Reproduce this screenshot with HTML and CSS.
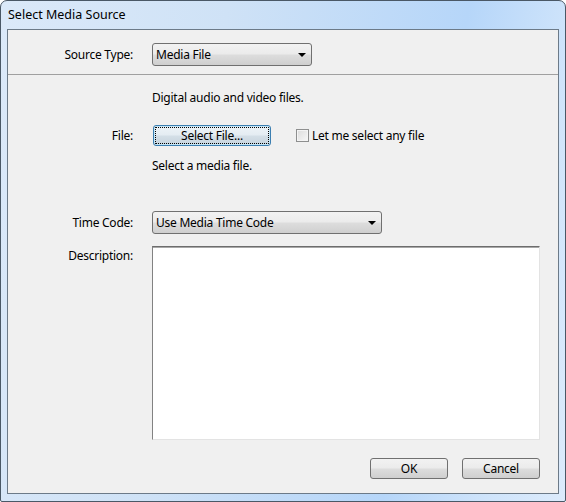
FILE: index.html
```html
<!DOCTYPE html>
<html lang="en">
<head>
    <meta charset="UTF-8">
    <title>Select Media Source</title>
    <link rel="stylesheet" href="styles.css">
</head>
<body>

<div class="window">
    <div class="titlebar">Select Media Source</div>

    <div class="client">
        <!-- source type picker -->
        <div class="form-row top-row">
            <label class="field-label">Source Type:</label>
            <div class="combo combo-short">
                <span class="combo-text">Media File</span>
                <span class="combo-arrow"></span>
            </div>
        </div>

        <div class="separator"></div>

        <div class="form-row hint-row">
            <span></span>
            <p class="hint">Digital audio and video files.</p>
        </div>

        <div class="form-row file-row">
            <label class="field-label">File:</label>
            <div class="file-controls">
                <button class="win-button focused select-file">Select File...</button>
                <label class="check">
                    <span class="check-box"></span>
                    Let me select any file
                </label>
            </div>
        </div>

        <div class="form-row status-row">
            <span></span>
            <p class="hint">Select a media file.</p>
        </div>

        <div class="form-row timecode-row">
            <label class="field-label">Time Code:</label>
            <div class="combo combo-long">
                <span class="combo-text">Use Media Time Code</span>
                <span class="combo-arrow"></span>
            </div>
        </div>

        <div class="form-row desc-row">
            <label class="field-label desc-label">Description:</label>
            <div class="textbox"></div>
        </div>

        <div class="dialog-buttons">
            <button class="win-button">OK</button>
            <button class="win-button">Cancel</button>
        </div>
    </div>
</div>

</body>
</html>
```

FILE: styles.css
```css
body {
    margin: 0;
    background: #fff;
    font-family: "Noto Sans", "Open Sans", sans-serif;
    font-size: 12px;
    letter-spacing: -0.25px;
    color: #000;
}

/* aero style window frame */
.window {
    width: 566px;
    height: 502px;
    box-sizing: border-box;
    border: 1px solid #4a5866;
    border-radius: 7px 7px 2px 2px;
    padding: 0 6px 7px 6px;
    background: linear-gradient(100deg, #dbe9f9 0%, #cfe2f6 35%, #b6d6f9 72%, #cfe4fb 88%, #dcebfc 100%);
}

.titlebar {
    height: 28px;
    line-height: 28px;
    padding-left: 1px;
    font-size: 12.5px;
    letter-spacing: 0;
    color: #000;
}

.client {
    height: 465px;
    box-sizing: border-box;
    border: 1px solid #6c7a88;
    background: #f0f0f0;
    padding: 13px 18px 0 0;
}

.form-row {
    display: grid;
    grid-template-columns: 125px 1fr;
    column-gap: 19px;
    align-items: center;
}

.field-label {
    text-align: right;
    line-height: 16px;
}

.hint {
    margin: 0;
    line-height: 16px;
}

/* dropdown list boxes */
.combo {
    height: 23px;
    box-sizing: border-box;
    border: 1px solid #707070;
    border-radius: 3px;
    background: linear-gradient(#f2f2f2 0%, #ebebeb 48%, #dddddd 52%, #cfcfcf 100%);
    display: flex;
    align-items: center;
    justify-content: space-between;
    padding: 0 5px 0 3px;
}

.combo-short {
    width: 160px;
}

.combo-long {
    width: 230px;
}

.combo-arrow {
    width: 0;
    height: 0;
    border-left: 4px solid transparent;
    border-right: 4px solid transparent;
    border-top: 4px solid #000;
    margin-top: 1px;
}

.separator {
    height: 1px;
    background: #a0a0a0;
    margin: 8px -18px 0 0;
}

.hint-row {
    margin-top: 15px;
}

.file-row {
    margin-top: 19px;
}

.file-controls {
    display: flex;
    align-items: center;
    gap: 25px;
}

.win-button {
    height: 21px;
    box-sizing: border-box;
    border: 1px solid #707070;
    border-radius: 3px;
    background: linear-gradient(#f2f2f2 0%, #ebebeb 48%, #dddddd 52%, #cfcfcf 100%);
    font-family: inherit;
    font-size: 12px;
    letter-spacing: inherit;
    color: #000;
    padding: 0;
    width: 78px;
}

.win-button.focused {
    border-color: #3c7fb1;
    box-shadow: inset 0 0 0 1px #c4e5f6;
    background: linear-gradient(#eef4f8 0%, #e4ecf2 48%, #d4dfe7 52%, #c6d3dd 100%);
    outline: 1px dotted #000;
    outline-offset: -3px;
}

.select-file {
    width: 118px;
    margin-left: 1px;
}

.check {
    display: flex;
    align-items: center;
    gap: 3px;
}

.check-box {
    width: 13px;
    height: 13px;
    box-sizing: border-box;
    border: 1px solid #8e8f8f;
    background: linear-gradient(135deg, #dcdcdc, #f7f7f7);
    box-shadow: inset 0 0 0 1px #f4f4f4;
}

.status-row {
    margin-top: 12px;
}

.timecode-row {
    margin-top: 37px;
}

.desc-row {
    margin-top: 12px;
    align-items: start;
}

.desc-label {
    padding-top: 2px;
}

.textbox {
    height: 194px;
    box-sizing: border-box;
    background: #fff;
    border: 1px solid;
    border-color: #6d6d6d #e3e3e3 #e3e3e3 #828282;
    box-shadow: inset 0 1px 0 #a8a8a8;
}

.dialog-buttons {
    display: flex;
    justify-content: flex-end;
    gap: 14px;
    margin-top: 18px;
}
```
